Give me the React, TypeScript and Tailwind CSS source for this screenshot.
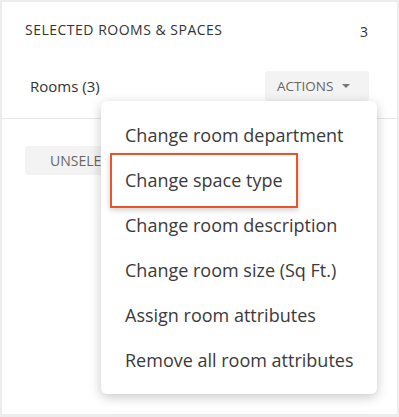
import React from "react";

const items = [
  "Change room department",
  "Change space type",
  "Change room description",
  "Change room size (Sq Ft.)",
  "Assign room attributes",
  "Remove all room attributes",
];

export default function App() {
  return (
    <div
      className="relative w-[399px] h-[417px] bg-white border-2 border-b-[3px] border-[#ececec] overflow-hidden"
      style={{ fontFamily: '"Open Sans", sans-serif' }}
    >
      <div className="flex items-start justify-between pl-[23px] pr-[29px] pt-[18px]">
        <div className="text-[14px] leading-[20px] tracking-[0.5px] text-[#333]">SELECTED ROOMS &amp; SPACES</div>
        <div className="text-[14px] leading-[20px] text-[#333] mt-[2px]">3</div>
      </div>
      <div className="flex items-center justify-between pl-[28px] pr-[28px] mt-[29px] pb-[17px] border-b border-[#e6e6e6]">
        <div className="text-[15px] text-[#333]">Rooms (3)</div>
        <div className="flex items-center gap-[9px] w-[104px] h-[30px] pl-[12px] bg-[#f3f3f3] rounded-[3px]">
          <span className="text-[13.5px] text-[#666]">ACTIONS</span>
          <svg width="8" height="4" viewBox="0 0 8 4">
            <path d="M0 0 L8 0 L4 4 Z" fill="#777" />
          </svg>
        </div>
      </div>
      <div className="pl-[23px] mt-[27px]">
        <div className="inline-flex items-center h-[29px] px-[25px] bg-[#f3f3f3] rounded-[3px] text-[14px] text-[#666]">
          UNSELECT ALL
        </div>
      </div>

      <div className="absolute left-[99px] top-[99px] w-[276px] h-[293px] bg-white rounded-[6px] shadow-[0_3px_12px_rgba(0,0,0,0.22)] pt-[12px]">
        {items.map((t) => (
          <div key={t} className="h-[45px] flex items-center px-[24px] text-[18px] text-[#3a3a3a] whitespace-nowrap">
            {t}
          </div>
        ))}
      </div>
      <div className="absolute left-[108px] top-[151px] w-[188px] h-[55px] border-2 border-[#e8552b] shadow-[0_2px_6px_rgba(0,0,0,0.2)]" />
    </div>
  );
}
